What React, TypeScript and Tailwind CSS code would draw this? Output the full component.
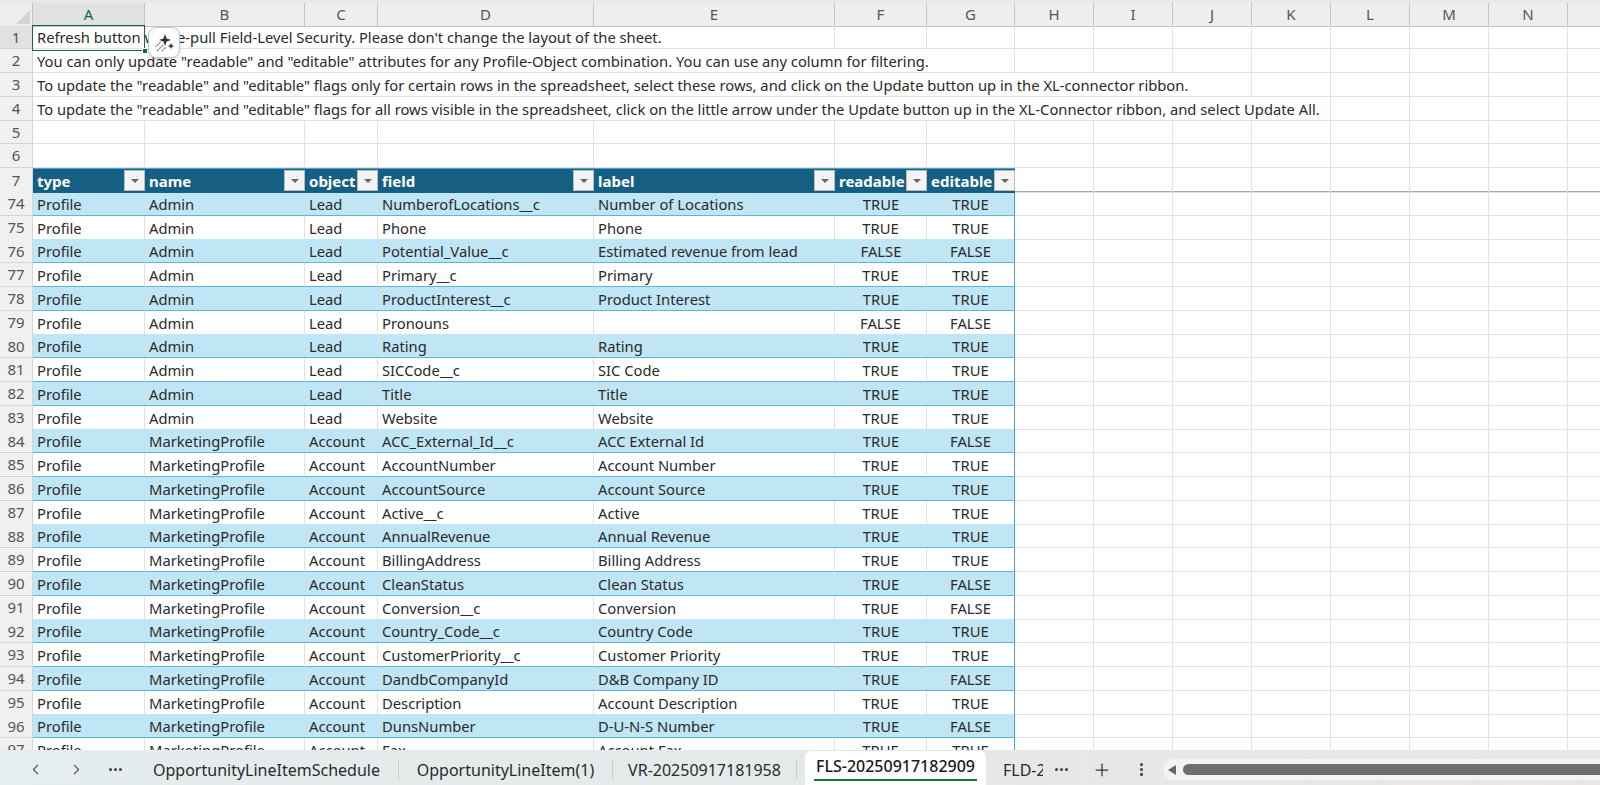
import { ChevronLeft, ChevronRight, Ellipsis, EllipsisVertical, Plus } from "lucide-react";

const GRID = "grid grid-cols-[33px_112px_160px_73px_216px_241px_92px_88px_79px_79px_79px_79px_79px_79px_79px_79px]";
const LETTERS = ["A", "B", "C", "D", "E", "F", "G", "H", "I", "J", "K", "L", "M", "N", "O", "P"];

const notes = [
  { text: "Refresh button will re-pull Field-Level Security. Please don't change the layout of the sheet.", span: "col-span-5", empty: 10 },
  { text: 'You can only update "readable" and "editable" attributes for any Profile-Object combination. You can use any column for filtering.', span: "col-span-7", empty: 8 },
  { text: 'To update the "readable" and "editable" flags only for certain rows in the spreadsheet, select these rows, and click on the Update button up in the XL-connector ribbon.', span: "col-span-10", empty: 5 },
  { text: 'To update the "readable" and "editable" flags for all rows visible in the spreadsheet, click on the little arrow under the Update button up in the XL-Connector ribbon, and select Update All.', span: "col-span-11", empty: 4 },
];

const headers = ["type", "name", "object", "field", "label", "readable", "editable"];

const rows: [number, string, string, string, string, string, string][] = [
  [74, "Admin", "Lead", "NumberofLocations__c", "Number of Locations", "TRUE", "TRUE"],
  [75, "Admin", "Lead", "Phone", "Phone", "TRUE", "TRUE"],
  [76, "Admin", "Lead", "Potential_Value__c", "Estimated revenue from lead", "FALSE", "FALSE"],
  [77, "Admin", "Lead", "Primary__c", "Primary", "TRUE", "TRUE"],
  [78, "Admin", "Lead", "ProductInterest__c", "Product Interest", "TRUE", "TRUE"],
  [79, "Admin", "Lead", "Pronouns", "", "FALSE", "FALSE"],
  [80, "Admin", "Lead", "Rating", "Rating", "TRUE", "TRUE"],
  [81, "Admin", "Lead", "SICCode__c", "SIC Code", "TRUE", "TRUE"],
  [82, "Admin", "Lead", "Title", "Title", "TRUE", "TRUE"],
  [83, "Admin", "Lead", "Website", "Website", "TRUE", "TRUE"],
  [84, "MarketingProfile", "Account", "ACC_External_Id__c", "ACC External Id", "TRUE", "FALSE"],
  [85, "MarketingProfile", "Account", "AccountNumber", "Account Number", "TRUE", "TRUE"],
  [86, "MarketingProfile", "Account", "AccountSource", "Account Source", "TRUE", "TRUE"],
  [87, "MarketingProfile", "Account", "Active__c", "Active", "TRUE", "TRUE"],
  [88, "MarketingProfile", "Account", "AnnualRevenue", "Annual Revenue", "TRUE", "TRUE"],
  [89, "MarketingProfile", "Account", "BillingAddress", "Billing Address", "TRUE", "TRUE"],
  [90, "MarketingProfile", "Account", "CleanStatus", "Clean Status", "TRUE", "FALSE"],
  [91, "MarketingProfile", "Account", "Conversion__c", "Conversion", "TRUE", "FALSE"],
  [92, "MarketingProfile", "Account", "Country_Code__c", "Country Code", "TRUE", "TRUE"],
  [93, "MarketingProfile", "Account", "CustomerPriority__c", "Customer Priority", "TRUE", "TRUE"],
  [94, "MarketingProfile", "Account", "DandbCompanyId", "D&B Company ID", "TRUE", "FALSE"],
  [95, "MarketingProfile", "Account", "Description", "Account Description", "TRUE", "TRUE"],
  [96, "MarketingProfile", "Account", "DunsNumber", "D-U-N-S Number", "TRUE", "FALSE"],
  [97, "MarketingProfile", "Account", "Fax", "Account Fax", "TRUE", "TRUE"],
];

function RowNumber({ n, active }: { n: number; active?: boolean }) {
  return (
    <div className={`flex items-center justify-center border-r border-b border-[#d4d4d4] text-[15px] text-[#555] ${active ? "bg-[#e1e1e1]" : "bg-[#f0f0f0]"}`}>
      {n}
    </div>
  );
}

function GridCell() {
  return <div className="border-r border-b border-[#e2e2e2]" />;
}

function FilterButton() {
  return (
    <span className="absolute right-0 top-[1px] flex h-[21px] w-[21px] items-center justify-center border border-[#bdbdbd] bg-[#f4f4f4]">
      <span className="h-0 w-0 border-x-[4px] border-t-[4px] border-x-transparent border-t-[#666]" />
    </span>
  );
}

function SparkleIcon() {
  return (
    <svg width="22" height="22" viewBox="0 0 22 22" fill="none">
      <path d="M12 2 L13.6 6.4 L18 8 L13.6 9.6 L12 14 L10.4 9.6 L6 8 L10.4 6.4 Z" fill="#333" />
      <path d="M18 11 L18.9 13.1 L21 14 L18.9 14.9 L18 17 L17.1 14.9 L15 14 L17.1 13.1 Z" fill="#333" />
      <path d="M7.5 10 L2.5 15 M10 13 L3.5 19.5 M12.5 15.5 L9 19" stroke="#777" strokeWidth="1.2" strokeDasharray="2.2 1" />
    </svg>
  );
}

function Sheet() {
  return (
    <div className="relative h-[747px] overflow-hidden bg-white text-[14.75px] text-[#2a2a2a]">
      <div className={`${GRID} h-[22.5px]`}>
        <div className="flex items-end justify-end border-r border-b border-[#c4c4c4] bg-[#eeeeee] p-[2px]">
          <span className="h-0 w-0 border-b-[14px] border-l-[14px] border-b-[#d4d4d4] border-l-transparent" />
        </div>
        {LETTERS.map((l, i) => (
          <div
            key={l}
            className={`flex items-center justify-center border-r border-b border-[#c4c4c4] text-[15px] ${i === 0 ? "bg-[#e1e1e1] text-[#0f6b37]" : "bg-[#eeeeee] text-[#555]"}`}
          >
            {l}
          </div>
        ))}
      </div>

      {notes.map((note, i) => (
        <div key={i} className={`${GRID} h-[23.75px]`}>
          <RowNumber n={i + 1} active={i === 0} />
          <div className={`${note.span} flex items-center overflow-hidden whitespace-nowrap border-r border-b border-[#e2e2e2] pl-[4px] pt-px`}>
            {note.text}
          </div>
          {Array.from({ length: note.empty }).map((_, j) => (
            <GridCell key={j} />
          ))}
        </div>
      ))}

      {[5, 6].map((n) => (
        <div key={n} className={`${GRID} h-[23.75px]`}>
          <RowNumber n={n} />
          {LETTERS.map((l) => (
            <GridCell key={l} />
          ))}
        </div>
      ))}

      <div className={`${GRID} h-[23.75px] border-b border-[#a8a8a8]`}>
        <RowNumber n={7} />
        {headers.map((h) => (
          <div key={h} className="relative flex items-center border-t border-[#4aa3d6] bg-[#156082] pl-[4px] pt-px text-[15px] font-bold text-white">
            {h}
            <FilterButton />
          </div>
        ))}
        {LETTERS.slice(7).map((l) => (
          <GridCell key={l} />
        ))}
      </div>

      {rows.map(([n, name, object, field, label, readable, editable], i) => {
        const band = i % 2 === 0;
        const fill = band ? "bg-[#c0e6f5]" : "border-r border-r-[#e2e2e2]";
        const cell = `flex items-center border-b border-b-[#5cb6e2] pl-[4px] pt-px whitespace-nowrap ${fill}`;
        return (
          <div key={n} className={`${GRID} h-[23.75px]`}>
            <RowNumber n={n} />
            <div className={cell}>Profile</div>
            <div className={cell}>{name}</div>
            <div className={cell}>{object}</div>
            <div className={cell}>{field}</div>
            <div className={cell}>{label}</div>
            <div className={`flex items-center justify-center border-b border-b-[#5cb6e2] pt-px ${fill}`}>{readable}</div>
            <div className={`flex items-center justify-center border-r border-b border-r-[#4aa3d6] border-b-[#5cb6e2] pt-px ${band ? "bg-[#c0e6f5]" : ""}`}>{editable}</div>
            {LETTERS.slice(7).map((l) => (
              <GridCell key={l} />
            ))}
          </div>
        );
      })}

      {/* selected cell A1 */}
      <div className="absolute left-[32px] top-[22px] h-[26px] w-[113px] border-[1.5px] border-[#0f6b37]" />
      <div className="absolute left-[142px] top-[45px] h-[6px] w-[6px] border border-white bg-[#0f6b37]" />
      <div className="absolute left-[148px] top-[24px] flex h-[31px] w-[32px] items-center justify-center rounded-lg border border-[#c4c4c4] bg-white shadow-md">
        <SparkleIcon />
      </div>
    </div>
  );
}

function Tab({ label, w }: { label: string; w: string }) {
  return (
    <div className={`flex h-[20px] items-center justify-center whitespace-nowrap border-r border-[#c8cccc] ${w}`}>{label}</div>
  );
}

function TabBar() {
  return (
    <div className="flex h-[35px] items-center overflow-hidden bg-gradient-to-r from-[#e6edee] via-[#e4e9e9] to-[#ebe6e2] pt-[4px] text-[16px] text-[#2a2a2a]">
      <div className="flex w-[135px] items-center pl-[27px] text-[#555]">
        <ChevronLeft size={17} strokeWidth={1.5} />
        <ChevronRight size={17} strokeWidth={1.5} className="ml-[24px]" />
        <Ellipsis size={17} strokeWidth={2.5} className="ml-[22px] text-[#444]" />
      </div>
      <Tab label="OpportunityLineItemSchedule" w="w-[264px]" />
      <Tab label="OpportunityLineItem(1)" w="w-[214px]" />
      <Tab label="VR-20250917181958" w="w-[184px]" />
      <div className="ml-[8px] -mt-[4px] flex h-[34px] w-[181px] flex-col self-end rounded-t-md bg-white px-[9px] pt-[2px] font-medium text-[#1a1a1a]">
        <span className="flex flex-1 items-center justify-center whitespace-nowrap">FLS-20250917182909</span>
        <span className="mb-[4px] h-[2px] bg-[#0f7b3a]" />
      </div>
      <div className="ml-[17px] w-[40px] overflow-hidden whitespace-nowrap">FLD-20250917</div>
      <Ellipsis size={17} strokeWidth={2.5} className="ml-[10px] text-[#444]" />
      <Plus size={20} strokeWidth={1.5} className="ml-[22px] text-[#333]" />
      <EllipsisVertical size={17} strokeWidth={2.5} className="ml-[21px] text-[#444]" />
      <div className="ml-[13px] flex h-[21px] flex-1 items-center rounded-l-full bg-[#f3f3f3] pl-[5px]">
        <span className="h-0 w-0 border-y-[5px] border-r-[8px] border-y-transparent border-r-[#666]" />
        <span className="ml-[7px] h-[11px] flex-1 rounded-l-full bg-[#6e6e6e]" />
      </div>
    </div>
  );
}

export default function App() {
  return (
    <div className="h-[785px] w-[1600px] overflow-hidden bg-white font-['Noto_Sans',sans-serif]">
      <div className="h-[3px] bg-[#ece7e3]" />
      <Sheet />
      <TabBar />
    </div>
  );
}
